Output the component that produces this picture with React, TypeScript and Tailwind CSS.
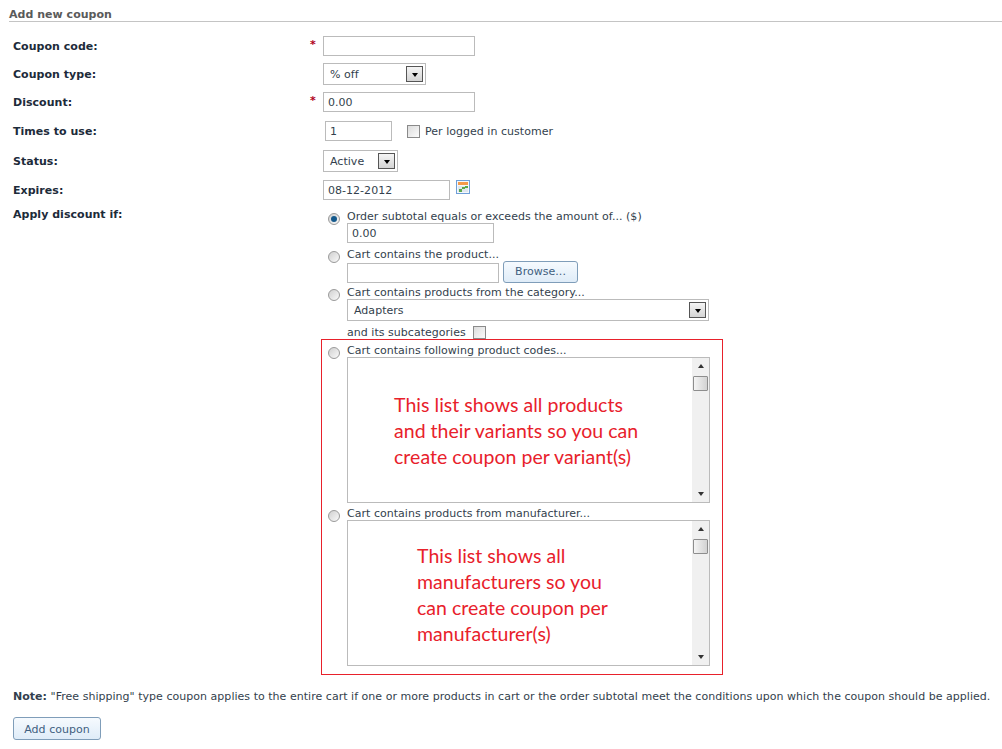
const font = "font-['DejaVu_Sans',Verdana,sans-serif]";

function Row({ label, required, className, children }: { label: string; required?: boolean; className: string; children: React.ReactNode }) {
  return (
    <div className={`flex items-center ${className}`}>
      <div className="w-[297px] pt-[2px] text-[11px] font-bold text-[#1d2b3a]">{label}</div>
      <div className="w-[13px] -mt-[2px] text-[11px] font-bold text-[#b00020]">{required ? "*" : ""}</div>
      {children}
    </div>
  );
}

function TextBox({ value, className }: { value?: string; className: string }) {
  return (
    <div className={`flex items-center border border-[#bbbbbb] bg-white px-1 pt-[2px] text-[11px] text-[#333f4d] ${className}`}>{value}</div>
  );
}

function SelectBox({ value, className }: { value: string; className: string }) {
  return (
    <div className={`flex items-center justify-between border border-[#bbbbbb] bg-white pl-[6px] pr-[2px] text-[11px] text-[#333f4d] ${className}`}>
      <span className="pt-[2px]">{value}</span>
      <span className="flex h-[16px] w-[17px] items-center justify-center border border-[#555555] bg-gradient-to-b from-[#f4f4f4] to-[#d4d4d4]">
        <span className="mt-[2px] h-0 w-0 border-x-[3.5px] border-t-[4px] border-x-transparent border-t-black" />
      </span>
    </div>
  );
}

function Radio({ checked }: { checked?: boolean }) {
  return (
    <span className="flex h-[12px] w-[12px] shrink-0 items-center justify-center rounded-full border border-[#9a9a9a] bg-gradient-to-br from-[#d0d0d0] to-[#fafafa]">
      {checked && <span className="h-[6px] w-[6px] rounded-full bg-[#14598c]" />}
    </span>
  );
}

function Check() {
  return <span className="block h-[13px] w-[13px] shrink-0 border border-[#8a8a8a] bg-gradient-to-br from-[#dcdcdc] to-[#fbfbfb]" />;
}

function Button({ label, className }: { label: string; className: string }) {
  return (
    <div className={`flex items-center justify-center rounded-[3px] border border-[#7f9db9] bg-gradient-to-b from-[#f6fafe] to-[#dfecf8] text-[11px] text-[#3f5f80] ${className}`}>
      {label}
    </div>
  );
}

function Option({ label, checked, className, children }: { label: string; checked?: boolean; className: string; children?: React.ReactNode }) {
  return (
    <div className={className}>
      <div className="flex h-[14px] items-center gap-[7px] pl-[5px] text-[11px] text-[#333f4d]">
        <span className="mt-[3px]"><Radio checked={checked} /></span>
        <span>{label}</span>
      </div>
      <div className="pl-[24px]">{children}</div>
    </div>
  );
}

function ListBox({ lines, padClass }: { lines: string[]; padClass: string }) {
  return (
    <div className="-mt-[1px] flex h-[146px] w-[363px] border border-[#bbbbbb] bg-white">
      <div className={`flex-1 font-['Lato',sans-serif] text-[19.5px] leading-[26px] text-[#e8212b] ${padClass}`}>
        {lines.map((l) => (
          <div key={l}>{l}</div>
        ))}
      </div>
      <div className="flex w-[17px] flex-col items-center bg-[#f0f0f0]">
        <span className="mt-[6px] h-0 w-0 border-x-[3.5px] border-b-[4px] border-x-transparent border-b-[#333333]" />
        <span className="mt-[8px] h-[15px] w-[15px] rounded-[1px] border border-[#8d8d8d] bg-gradient-to-r from-[#f4f4f4] to-[#d2d2d2]" />
        <span className="mt-auto mb-[6px] h-0 w-0 border-x-[3.5px] border-t-[4px] border-x-transparent border-t-[#333333]" />
      </div>
    </div>
  );
}

function CalendarIcon() {
  return (
    <svg width="14" height="14" viewBox="0 0 14 14" className="ml-[6px] -mt-[7px]">
      <rect x="0.5" y="0.5" width="13" height="13" fill="#f4f8fc" stroke="#6f9fd8" />
      <rect x="2" y="2" width="10" height="3" fill="#f59a4a" />
      <rect x="2" y="6" width="10" height="6" fill="#dfe6ee" />
      <rect x="6" y="7" width="3" height="2" fill="#5aa84a" />
      <rect x="3" y="9" width="3" height="3" fill="#5aa84a" />
      <rect x="9" y="6" width="3" height="2" fill="#5aa84a" />
    </svg>
  );
}

export default function App() {
  return (
    <div className={`relative h-[749px] w-[1002px] overflow-hidden bg-white tracking-[0.03px] ${font}`}>
      <div className="ml-[9px] flex h-[22px] items-start border-b border-[#c4c4c4] pt-[8px] text-[11px] font-bold leading-[14px] text-[#5a5a5a]">
        Add new coupon
      </div>

      <div className="pl-[13px]">
        <Row label="Coupon code:" required className="mt-[14px] h-[20px]">
          <TextBox className="h-[20px] w-[152px]" />
        </Row>
        <Row label="Coupon type:" className="mt-[7px] h-[22px]">
          <SelectBox value="% off" className="h-[22px] w-[103px]" />
        </Row>
        <Row label="Discount:" required className="mt-[7px] h-[20px]">
          <TextBox value="0.00" className="h-[20px] w-[152px]" />
        </Row>
        <Row label="Times to use:" className="mt-[9px] h-[20px]">
          <div className="ml-[2px] flex items-center">
            <TextBox value="1" className="h-[20px] w-[67px]" />
            <span className="ml-[15px]"><Check /></span>
            <span className="ml-[5px] pt-[2px] text-[11px] text-[#333f4d]">Per logged in customer</span>
          </div>
        </Row>
        <Row label="Status:" className="mt-[9px] h-[22px]">
          <SelectBox value="Active" className="h-[22px] w-[75px]" />
        </Row>
        <Row label="Expires:" className="mt-[8px] h-[20px]">
          <TextBox value="08-12-2012" className="h-[20px] w-[127px]" />
          <CalendarIcon />
        </Row>

        <div className="mt-[7px] flex">
          <div className="w-[310px] text-[11px] font-bold leading-[16px] text-[#1d2b3a]">Apply discount if:</div>
          <div className="flex flex-col">
            <Option label="Order subtotal equals or exceeds the amount of... ($)" checked className="mt-[3px]">
              <TextBox value="0.00" className="-mt-[1px] h-[20px] w-[147px]" />
            </Option>
            <Option label="Cart contains the product..." className="mt-[5px]">
              <div className="-mt-[1px] flex items-start gap-[4px]">
                <TextBox className="mt-[2px] h-[20px] w-[152px]" />
                <Button label="Browse..." className="h-[22px] w-[75px]" />
              </div>
            </Option>
            <Option label="Cart contains products from the category..." className="mt-[3px]">
              <SelectBox value="Adapters" className="-mt-[1px] h-[22px] w-[362px]" />
              <div className="mt-[5px] flex h-[15px] items-center gap-[7px] text-[11px] text-[#333f4d]">
                <span>and its subcategories</span>
                <span className="-mt-[3px]"><Check /></span>
              </div>
            </Option>
            <Option label="Cart contains following product codes..." className="mt-[3px]">
              <ListBox lines={["This list shows all products", "and their variants so you can", "create coupon per variant(s)"]} padClass="pl-[46px] pt-[34px]" />
            </Option>
            <Option label="Cart contains products from manufacturer..." className="mt-[4px]">
              <ListBox lines={["This list shows all", "manufacturers so you", "can create coupon per", "manufacturer(s)"]} padClass="pl-[69px] pt-[22px]" />
            </Option>
          </div>
        </div>

        <div className="mt-[23px] text-[11px] leading-[16px] text-[#333f4d]">
          <span className="font-bold">Note:</span> "Free shipping" type coupon applies to the entire cart if one or more products in cart or the order subtotal meet the conditions upon which the coupon should be applied.
        </div>
        <Button label="Add coupon" className="mt-[12px] h-[23px] w-[88px] pt-[3px]" />
      </div>

      <div className="absolute left-[321px] top-[339px] h-[336px] w-[402px] border border-[#e8212b]" />
    </div>
  );
}
